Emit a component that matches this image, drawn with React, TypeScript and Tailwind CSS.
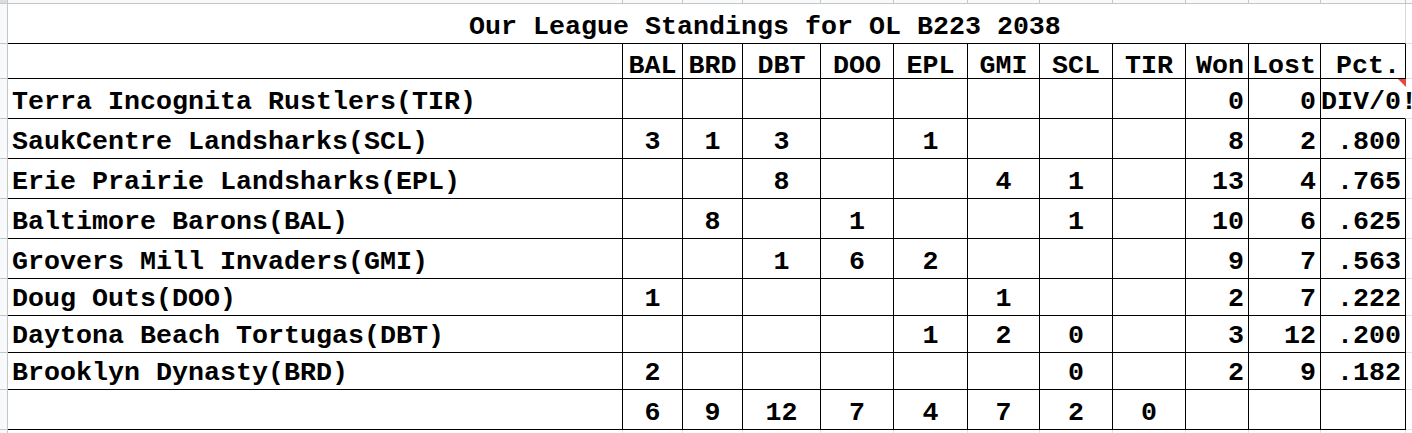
import React from "react";

const teams = ["BAL", "BRD", "DBT", "DOO", "EPL", "GMI", "SCL", "TIR"];

type Row = { name: string; v: string[]; won: string; lost: string; pct: string; h: "tall" | "short" };

const rows: Row[] = [
  { name: "Terra Incognita Rustlers(TIR)", v: ["", "", "", "", "", "", "", ""], won: "0", lost: "0", pct: "DIV/0!", h: "tall" },
  { name: "SaukCentre Landsharks(SCL)", v: ["3", "1", "3", "", "1", "", "", ""], won: "8", lost: "2", pct: ".800", h: "tall" },
  { name: "Erie Prairie Landsharks(EPL)", v: ["", "", "8", "", "", "4", "1", ""], won: "13", lost: "4", pct: ".765", h: "tall" },
  { name: "Baltimore Barons(BAL)", v: ["", "8", "", "1", "", "", "1", ""], won: "10", lost: "6", pct: ".625", h: "tall" },
  { name: "Grovers Mill Invaders(GMI)", v: ["", "", "1", "6", "2", "", "", ""], won: "9", lost: "7", pct: ".563", h: "tall" },
  { name: "Doug Outs(DOO)", v: ["1", "", "", "", "", "1", "", ""], won: "2", lost: "7", pct: ".222", h: "short" },
  { name: "Daytona Beach Tortugas(DBT)", v: ["", "", "", "", "1", "2", "0", ""], won: "3", lost: "12", pct: ".200", h: "short" },
  { name: "Brooklyn Dynasty(BRD)", v: ["2", "", "", "", "", "", "0", ""], won: "2", lost: "9", pct: ".182", h: "short" },
];

const totals = ["6", "9", "12", "7", "4", "7", "2", "0"];

const gutter = "bg-[#f8f9fa] border-r border-b border-[#c4c7c5]";
const margin = "border-b border-[#e1e1e1]";
const cell = "flex items-end border-r border-b border-black pb-[2px]";

export default function App() {
  return (
    <div className="w-[1412px] h-[433px] overflow-hidden bg-white text-black font-['Liberation_Mono','Courier_New',monospace] font-bold text-[26.67px]">
      <div className="grid grid-cols-[8px_615px_60px_60px_78px_73px_74px_72px_73px_73px_63px_72px_85px_6px] grid-rows-[4px_40px_35px_40px_40px_40px_40px_40px_37px_37px_37px_40px_3px]">
        {/* top strip */}
        <div className="bg-[#dadce0] border-r border-b border-[#c4c7c5]" />
        {Array.from({ length: 12 }).map((_, i) => (
          <div key={"t" + i} className="bg-[#f8f9fa] border-r border-b border-[#c4c7c5]" />
        ))}
        <div className="bg-[#f8f9fa] border-b border-[#c4c7c5]" />

        {/* title row */}
        <div className={gutter} />
        <div className="col-span-12 flex items-end pl-[461px] pb-[2px] border-b border-b-black border-r border-r-[#d9d9d9]">
          <span className="leading-none whitespace-pre">Our League Standings for OL B223 2038</span>
        </div>
        <div className={margin} />

        {/* header row */}
        <div className={gutter} />
        <div className="border-r border-b border-black" />
        {teams.map((t) => (
          <div key={t} className="flex items-end justify-center border-r border-b border-black">
            <span className="leading-[24px]">{t}</span>
          </div>
        ))}
        <div className="flex items-end justify-end pr-[4px] border-r border-b border-black">
          <span className="leading-[24px]">Won</span>
        </div>
        <div className="flex items-end justify-end pr-[4px] border-r border-b border-black">
          <span className="leading-[24px]">Lost</span>
        </div>
        <div className="flex items-end justify-end pr-[5px] border-r border-b border-black">
          <span className="leading-[24px]">Pct.</span>
        </div>
        <div className={margin} />

        {/* data rows */}
        {rows.map((r, ri) => (
          <React.Fragment key={r.name}>
            <div className={gutter} />
            <div className={cell + " pl-[4px]"}>
              <span className="leading-none whitespace-pre">{r.name}</span>
            </div>
            {r.v.map((v, i) => (
              <div key={i} className={cell + " justify-center"}>
                <span className="leading-none">{v}</span>
              </div>
            ))}
            <div className={cell + " justify-end pr-[4px]"}>
              <span className="leading-none">{r.won}</span>
            </div>
            <div className={cell + " justify-end pr-[4px]"}>
              <span className="leading-none">{r.lost}</span>
            </div>
            {ri === 0 ? (
              <div className="relative flex items-end border-b border-black border-r border-r-transparent pb-[2px]">
                <span className="leading-none whitespace-pre">{r.pct}</span>
                <svg className="absolute top-0 -right-[1px]" width="8" height="8" viewBox="0 0 8 8">
                  <polygon points="0,0 8,0 8,8" fill="#e8453c" />
                </svg>
              </div>
            ) : (
              <div className={cell + " justify-end pr-[4px]"}>
                <span className="leading-none">{r.pct}</span>
              </div>
            )}
            <div className={margin} />
          </React.Fragment>
        ))}

        {/* totals row */}
        <div className={gutter} />
        <div className={cell} />
        {totals.map((v, i) => (
          <div key={"tot" + i} className={cell + " justify-center"}>
            <span className="leading-none">{v}</span>
          </div>
        ))}
        <div className={cell} />
        <div className={cell} />
        <div className={cell} />
        <div className={margin} />

        {/* bottom strip */}
        <div className="bg-[#f8f9fa] border-r border-[#c4c7c5]" />
        {Array.from({ length: 12 }).map((_, i) => (
          <div key={"b" + i} className="border-r border-[#e1e1e1]" />
        ))}
        <div />
      </div>
    </div>
  );
}
